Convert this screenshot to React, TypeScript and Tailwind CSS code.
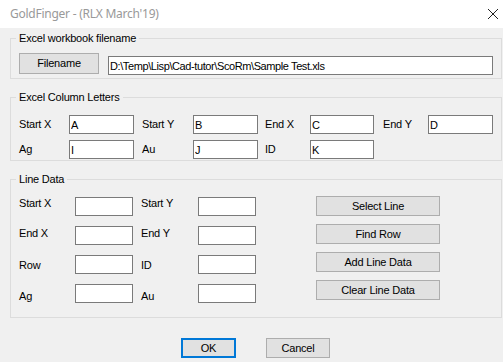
import React from "react";

const Field = ({ w, value = "", className = "" }: { w: string; value?: string; className?: string }) => (
  <input
    readOnly
    value={value}
    className={`h-[19px] ${w} shrink-0 border border-[#7a7a7a] bg-white px-[1px] py-0 text-[11px] leading-[17px] text-black outline-none ${className}`}
  />
);

const Btn = ({ w, h, children, className = "" }: { w: string; h: string; children: React.ReactNode; className?: string }) => (
  <button
    className={`${w} ${h} shrink-0 border border-[#adadad] bg-[#e1e1e1] text-[11px] leading-none text-black ${className}`}
  >
    {children}
  </button>
);

const Group = ({ title, cls, children }: { title: string; cls: string; children: React.ReactNode }) => (
  <div className={`ml-[10px] w-[492px] border border-[#dcdcdc] ${cls}`}>
    <div className="-mt-[8px] ml-[5px] w-fit bg-[#f0f0f0] px-[3px] leading-[14px]">{title}</div>
    {children}
  </div>
);

export default function App() {
  return (
    <div className="w-[503px] h-[362px] overflow-hidden bg-[#f0f0f0] font-['Liberation_Sans',Arial,sans-serif] text-[11px] tracking-[-0.2px] text-black">
      {/* Title bar */}
      <div className="flex h-[28px] items-center justify-between bg-white pl-[10px] pr-[4px]">
        <span className="font-['Noto_Sans',sans-serif] text-[12px] tracking-[-0.25px] text-[#999999]">GoldFinger - (RLX March'19)</span>
        <svg width="12" height="12" viewBox="0 0 12 12">
          <path d="M1 1 L11 11 M11 1 L1 11" stroke="#222" strokeWidth="1" fill="none" />
        </svg>
      </div>

      {/* Group 1 */}
      <Group title="Excel workbook filename" cls="mt-[10px] h-[41px]">
        <div className="mt-[8px] flex items-start pl-[8px]">
          <Btn w="w-[80px]" h="h-[21px]">Filename</Btn>
          <Field
            w="w-[385px]"
            className="ml-[9px] mt-[3px] text-[10.5px] tracking-[-0.4px]"
            value={"D:\\Temp\\Lisp\\Cad-tutor\\ScoRm\\Sample Test.xls"}
          />
        </div>
      </Group>

      {/* Group 2 */}
      <Group title="Excel Column Letters" cls="mt-[18px] h-[64px]">
        <div className="mt-[11px] flex flex-col gap-[6px] pl-[8px]">
          <div className="flex items-center">
            <span className="w-[50px] shrink-0">Start X</span>
            <Field w="w-[65px]" value="A" />
            <span className="w-[59px] shrink-0 pl-[8px]">Start Y</span>
            <Field w="w-[65px]" value="B" />
            <span className="w-[52px] shrink-0 pl-[7px]">End X</span>
            <Field w="w-[64px]" value="C" />
            <span className="w-[54px] shrink-0 pl-[9px]">End Y</span>
            <Field w="w-[65px]" value="D" />
          </div>
          <div className="flex items-center">
            <span className="w-[50px] shrink-0">Ag</span>
            <Field w="w-[65px]" value="I" />
            <span className="w-[59px] shrink-0 pl-[8px]">Au</span>
            <Field w="w-[65px]" value="J" />
            <span className="w-[52px] shrink-0 pl-[7px]">ID</span>
            <Field w="w-[64px]" value="K" />
          </div>
        </div>
      </Group>

      {/* Group 3 */}
      <Group title="Line Data" cls="mt-[18px] h-[139px]">
        <div className="mt-[10px] flex items-start pl-[8px]">
          <div className="flex flex-col">
            {[
              ["Start X", "Start Y", "mt-[0px]"],
              ["End X", "End Y", "mt-[1px]"],
              ["Row", "ID", "mt-[4px]"],
              ["Ag", "Au", "mt-[6px]"],
            ].map(([a, b, m]) => (
              <div key={a} className="flex h-[29px] items-start">
                <span className={`w-[56px] shrink-0 leading-[14px] ${m}`}>{a}</span>
                <Field w="w-[58px]" className="mt-[1px]" />
                <span className={`w-[65px] shrink-0 pl-[8px] leading-[14px] ${m}`}>{b}</span>
                <Field w="w-[58px]" className="mt-[1px]" />
              </div>
            ))}
          </div>
          <div className="ml-[60px] flex flex-col gap-[8px]">
            <Btn w="w-[124px]" h="h-[20px]">Select Line</Btn>
            <Btn w="w-[124px]" h="h-[20px]">Find Row</Btn>
            <Btn w="w-[124px]" h="h-[20px]">Add Line Data</Btn>
            <Btn w="w-[124px]" h="h-[20px]">Clear Line Data</Btn>
          </div>
        </div>
      </Group>

      {/* Footer */}
      <div className="mt-[20px] flex pl-[181px]">
        <button className="h-[20px] w-[55px] border-2 border-[#0078d7] bg-[#e1e1e1] text-[11px] leading-none text-black">OK</button>
        <Btn w="w-[64px]" h="h-[20px]" className="ml-[30px]">Cancel</Btn>
      </div>
    </div>
  );
}
